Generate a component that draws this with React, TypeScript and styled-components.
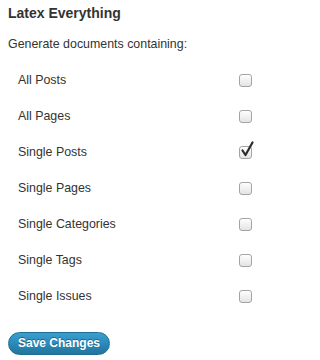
import styled, { createGlobalStyle } from "styled-components";
import { useState } from "react";

const GlobalStyle = createGlobalStyle`
    body {
        margin: 0;
        background: #fff;
        font-family: "Liberation Sans", Arial, sans-serif;
        color: #333;
    }
`;

const Spage = styled.div`
    width: 276px;
    height: 360px;
    box-sizing: border-box;
    padding: 5px 8px 0 8px;
`;
const Stitle = styled.h3`
    margin: 0;
    font-size: 14px;
    line-height: 17px;
    font-weight: bold;
    color: #333;
`;
const Sintro = styled.p`
    margin: 15px 0 0 0;
    font-size: 12.4px;
    line-height: 15px;
`;
const Slist = styled.ul`
    list-style: none;
    margin: 10px 0 0 0;
    padding: 0 16px 0 10px;
`;
const Srow = styled.li`
    height: 36px;
    display: flex;
    align-items: center;
    justify-content: space-between;
    font-size: 12.4px;
`;
const SboxWrap = styled.label`
    position: relative;
    width: 13px;
    height: 13px;
    display: block;
    cursor: pointer;
`;
const Sbox = styled.input`
    appearance: none;
    margin: 0;
    width: 13px;
    height: 13px;
    box-sizing: border-box;
    border: 1px solid #a4a4a4;
    border-radius: 3px;
    background: linear-gradient(to bottom, #fdfdfd 0%, #f0f0f0 55%, #e4e4e4 100%);
    box-shadow: inset 0 1px 0 #fff;
    display: block;
    cursor: pointer;
`;
const Scheck = styled.svg`
    position: absolute;
    left: 2px;
    top: -5px;
    width: 13px;
    height: 17px;
    pointer-events: none;
`;
const Sbutton = styled.button`
    margin-top: 18px;
    height: 23px;
    padding: 0 9px;
    border: 1px solid #1f6f94;
    border-radius: 12px;
    background: linear-gradient(to bottom, #3a9fd0 0%, #2a8abb 50%, #21759b 100%);
    color: #fff;
    font-family: "Liberation Sans", Arial, sans-serif;
    font-size: 12px;
    font-weight: bold;
    line-height: 21px;
    text-shadow: 0 -1px 0 rgba(0, 0, 0, 0.35);
    cursor: pointer;
`;

const OPTIONS = [
    "All Posts",
    "All Pages",
    "Single Posts",
    "Single Pages",
    "Single Categories",
    "Single Tags",
    "Single Issues",
];

const App = () => {
    const [checked, setChecked] = useState<string[]>(["Single Posts"]);

    const toggle = (name: string) => {
        setChecked(checked.includes(name) ? checked.filter((c) => c !== name) : [...checked, name]);
    };

    return (
        <Spage>
            <GlobalStyle />
            <Stitle>Latex Everything</Stitle>
            <Sintro>Generate documents containing:</Sintro>
            <Slist>
                {OPTIONS.map((name) => (
                    <Srow key={name}>
                        <span>{name}</span>
                        <SboxWrap>
                            <Sbox type="checkbox" checked={checked.includes(name)} onChange={() => toggle(name)} />
                            {checked.includes(name) && (
                                <Scheck viewBox="0 0 13 17">
                                    <path d="M1.5 9.5 L4.5 14 L11.5 1.5" fill="none" stroke="#2b2b2b" strokeWidth="2.2" strokeLinejoin="round" strokeLinecap="round" />
                                </Scheck>
                            )}
                        </SboxWrap>
                    </Srow>
                ))}
            </Slist>
            <Sbutton>Save Changes</Sbutton>
        </Spage>
    );
};

export default App;
